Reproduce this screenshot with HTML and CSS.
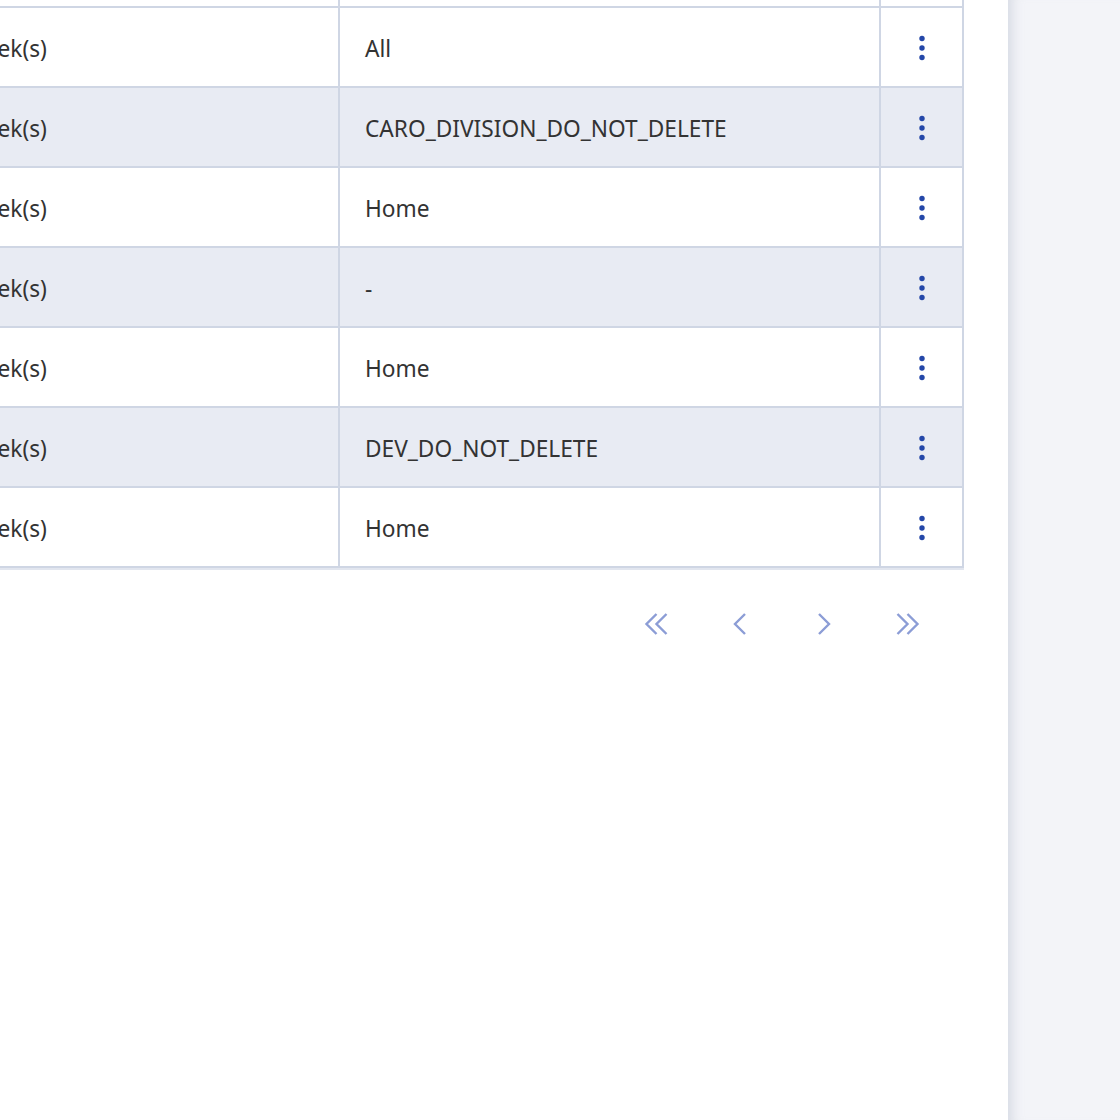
FILE: index.html
```html
<!DOCTYPE html>
<html lang="en">

<head>
    <meta charset="UTF-8">
    <title>Schedules</title>
    <link rel="stylesheet" href="styles.css">
</head>

<body>
    <div id="page">
        <main id="content">
            <table id="schedules">
                <colgroup>
                    <col class="colRepeat">
                    <col class="colScope">
                    <col class="colMenu">
                </colgroup>
                <tbody>
                    <tr class="head">
                        <td>Repeats every</td>
                        <td>Scope</td>
                        <td></td>
                    </tr>
                    <tr>
                        <td>1 week(s)</td>
                        <td>All</td>
                        <td class="menu"><button class="kebab"><svg width="6" height="26" viewBox="0 0 6 26"><circle cx="3" cy="3.5" r="2.7"/><circle cx="3" cy="13" r="2.7"/><circle cx="3" cy="22.5" r="2.7"/></svg></button></td>
                    </tr>
                    <tr>
                        <td>1 week(s)</td>
                        <td>CARO_DIVISION_DO_NOT_DELETE</td>
                        <td class="menu"><button class="kebab"><svg width="6" height="26" viewBox="0 0 6 26"><circle cx="3" cy="3.5" r="2.7"/><circle cx="3" cy="13" r="2.7"/><circle cx="3" cy="22.5" r="2.7"/></svg></button></td>
                    </tr>
                    <tr>
                        <td>1 week(s)</td>
                        <td>Home</td>
                        <td class="menu"><button class="kebab"><svg width="6" height="26" viewBox="0 0 6 26"><circle cx="3" cy="3.5" r="2.7"/><circle cx="3" cy="13" r="2.7"/><circle cx="3" cy="22.5" r="2.7"/></svg></button></td>
                    </tr>
                    <tr>
                        <td>1 week(s)</td>
                        <td>-</td>
                        <td class="menu"><button class="kebab"><svg width="6" height="26" viewBox="0 0 6 26"><circle cx="3" cy="3.5" r="2.7"/><circle cx="3" cy="13" r="2.7"/><circle cx="3" cy="22.5" r="2.7"/></svg></button></td>
                    </tr>
                    <tr>
                        <td>1 week(s)</td>
                        <td>Home</td>
                        <td class="menu"><button class="kebab"><svg width="6" height="26" viewBox="0 0 6 26"><circle cx="3" cy="3.5" r="2.7"/><circle cx="3" cy="13" r="2.7"/><circle cx="3" cy="22.5" r="2.7"/></svg></button></td>
                    </tr>
                    <tr>
                        <td>1 week(s)</td>
                        <td>DEV_DO_NOT_DELETE</td>
                        <td class="menu"><button class="kebab"><svg width="6" height="26" viewBox="0 0 6 26"><circle cx="3" cy="3.5" r="2.7"/><circle cx="3" cy="13" r="2.7"/><circle cx="3" cy="22.5" r="2.7"/></svg></button></td>
                    </tr>
                    <tr>
                        <td>1 week(s)</td>
                        <td>Home</td>
                        <td class="menu"><button class="kebab"><svg width="6" height="26" viewBox="0 0 6 26"><circle cx="3" cy="3.5" r="2.7"/><circle cx="3" cy="13" r="2.7"/><circle cx="3" cy="22.5" r="2.7"/></svg></button></td>
                    </tr>
                </tbody>
            </table>
            <nav id="pager">
                <button class="pageBtn" title="First page"><svg width="24" height="22" viewBox="0 0 24 22"><path d="M12.5 1 L2.5 11 L12.5 21 M22.5 1 L12.5 11 L22.5 21"/></svg></button>
                <button class="pageBtn" title="Previous page"><svg width="24" height="22" viewBox="0 0 24 22"><path d="M17 1 L7 11 L17 21"/></svg></button>
                <button class="pageBtn" title="Next page"><svg width="24" height="22" viewBox="0 0 24 22"><path d="M7 1 L17 11 L7 21"/></svg></button>
                <button class="pageBtn" title="Last page"><svg width="24" height="22" viewBox="0 0 24 22"><path d="M1.5 1 L11.5 11 L1.5 21 M11.5 1 L21.5 11 L11.5 21"/></svg></button>
            </nav>
        </main>
        <aside id="sidePanel"></aside>
    </div>
</body>

</html>
```

FILE: styles.css
```css
body {
    font-family: "Noto Sans", "Open Sans", sans-serif;
    margin: 0;
    background: #fff;
    color: #333;
}

#page {
    display: flex;
    min-height: 1120px;
    overflow: hidden;
}

#content {
    width: 1008px;
    flex: none;
}

#sidePanel {
    flex: 1;
    background: #f3f4f8;
    box-shadow: inset 14px 0 12px -10px rgba(160, 168, 190, 0.35);
}

#schedules {
    border-collapse: collapse;
    table-layout: fixed;
    width: 1041px;
    margin-left: -79px;
    margin-top: -74px;
    font-size: 22.7px;
    box-shadow: 0 2px 0 #e2e6ef;
}

.colRepeat {
    width: 417px;
}

.colScope {
    width: 541px;
}

.colMenu {
    width: 83px;
}

#schedules td {
    height: 75px;
    padding: 3px 24px 0 25px;
    border: 2px solid #cfd6e4;
    vertical-align: middle;
    white-space: nowrap;
}

#schedules tr:nth-child(odd) td {
    background: #e8ebf3;
}

#schedules tr.head td {
    background: #fff;
}

#schedules td.menu {
    height: 76px;
    padding: 2px 0 0;
}

.kebab {
    display: block;
    margin: 0 auto;
    background: none;
    border: none;
    padding: 0;
    cursor: pointer;
}

.kebab svg {
    display: block;
    fill: #2447a8;
}

#pager {
    display: flex;
    justify-content: flex-end;
    gap: 36px;
    margin: 36px 76px 0 0;
}

.pageBtn {
    width: 48px;
    height: 40px;
    background: none;
    border: none;
    padding: 0;
    display: flex;
    align-items: center;
    justify-content: center;
    cursor: pointer;
}

.pageBtn svg {
    fill: none;
    stroke: #8c9dd6;
    stroke-width: 2.4;
}
```
